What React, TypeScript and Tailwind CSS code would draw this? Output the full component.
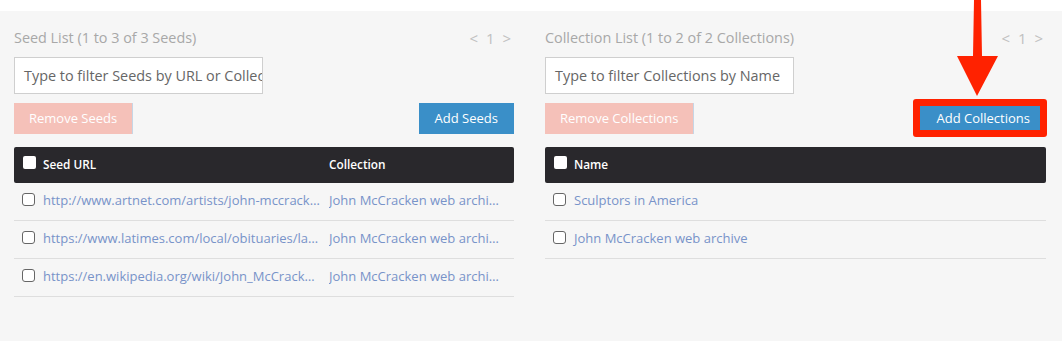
const seeds = [
  { url: 'http://www.artnet.com/artists/john-mccracken/', collection: 'John McCracken web archive' },
  { url: 'https://www.latimes.com/local/obituaries/la-me-john-mccracken', collection: 'John McCracken web archive' },
  { url: 'https://en.wikipedia.org/wiki/John_McCracken_(sculptor)', collection: 'John McCracken web archive' },
]

const collections = ['Sculptors in America', 'John McCracken web archive']

function HeaderBox() {
  return <span className="inline-block w-[13px] h-[13px] bg-white rounded-[2px] -mt-[6px] shrink-0" />
}

function RowBox() {
  return <span className="inline-block w-[13px] h-[13px] bg-white border border-[#666] rounded-[3px] -mt-[2px] shrink-0" />
}

function PanelTop({ title, placeholder, remove, add, highlight }: { title: string; placeholder: string; remove: string; add: string; highlight?: boolean }) {
  return (
    <>
      <div className="flex items-center justify-between h-[20px]">
        <span className="text-[14.4px] text-[#a8a8a8]">{title}</span>
        <span className="text-[15px] text-[#c0c0c0] tracking-[2px] pr-[1px]">&lt; 1 &gt;</span>
      </div>
      <div className="mt-[9px] w-[249px] h-[37px] bg-white border border-[#cfcfcf] flex items-center px-[9px] overflow-hidden">
        <span className="text-[14.4px] text-[#666] whitespace-nowrap">{placeholder}</span>
      </div>
      <div className="mt-[9px] flex items-center justify-between">
        <button className="h-[31px] px-[15px] bg-[#f5c1b9] text-white text-[13px] border-r border-[#c5d6e6]">{remove}</button>
        <div className="relative">
          <button className="h-[31px] px-[16px] bg-[#3a8fc8] text-white text-[13px]">{add}</button>
          {highlight && (
            <div className="absolute -left-[7px] -right-[1px] -top-[4px] -bottom-[3px] border-[7px] border-[#ff2200] rounded-[3px]" />
          )}
        </div>
      </div>
    </>
  )
}

export default function App() {
  return (
    <div className="w-[1062px] h-[341px] overflow-hidden relative" style={{ fontFamily: '"Open Sans", "Noto Sans", sans-serif' }}>
      <div className="h-[11px] bg-white" />
      <div className="h-[330px] bg-[#f6f6f6] flex pl-[14px] pr-[16px] pt-[17px] gap-[31px]">
        <div className="w-[500px] flex flex-col">
          <PanelTop
            title="Seed List (1 to 3 of 3 Seeds)"
            placeholder="Type to filter Seeds by URL or Collection"
            remove="Remove Seeds"
            add="Add Seeds"
          />
          <div className="mt-[13px] h-[36px] bg-[#29282c] rounded-[2px] flex items-center pl-[9px] text-white text-[11.8px] font-semibold">
            <HeaderBox />
            <span className="ml-[7px] w-[286px]">Seed URL</span>
            <span>Collection</span>
          </div>
          {seeds.map((s) => (
            <div key={s.url} className="h-[38px] border-b border-[#dedede] flex items-center pl-[8px] pb-[2px] text-[13px] text-[#7893c9]">
              <RowBox />
              <span className="ml-[8px] w-[280px] truncate pr-[3px]">{s.url}</span>
              <span className="ml-[6px] w-[172px] truncate">{s.collection}</span>
            </div>
          ))}
        </div>
        <div className="w-[501px] flex flex-col">
          <PanelTop
            title="Collection List (1 to 2 of 2 Collections)"
            placeholder="Type to filter Collections by Name"
            remove="Remove Collections"
            add="Add Collections"
            highlight
          />
          <div className="mt-[13px] h-[36px] bg-[#29282c] rounded-[2px] flex items-center pl-[9px] text-white text-[11.8px] font-semibold">
            <HeaderBox />
            <span className="ml-[7px]">Name</span>
          </div>
          {collections.map((c) => (
            <div key={c} className="h-[38px] border-b border-[#dedede] flex items-center pl-[8px] pb-[2px] text-[13px] text-[#7893c9]">
              <RowBox />
              <span className="ml-[8px]">{c}</span>
            </div>
          ))}
        </div>
      </div>
      <svg className="absolute left-[957px] top-0" width="42" height="98" viewBox="0 0 42 98">
        <path d="M17 0 L24 0 L25 56 L41 56 L20 96 L0 56 L16 56 Z" fill="#ff2200" />
      </svg>
    </div>
  )
}
